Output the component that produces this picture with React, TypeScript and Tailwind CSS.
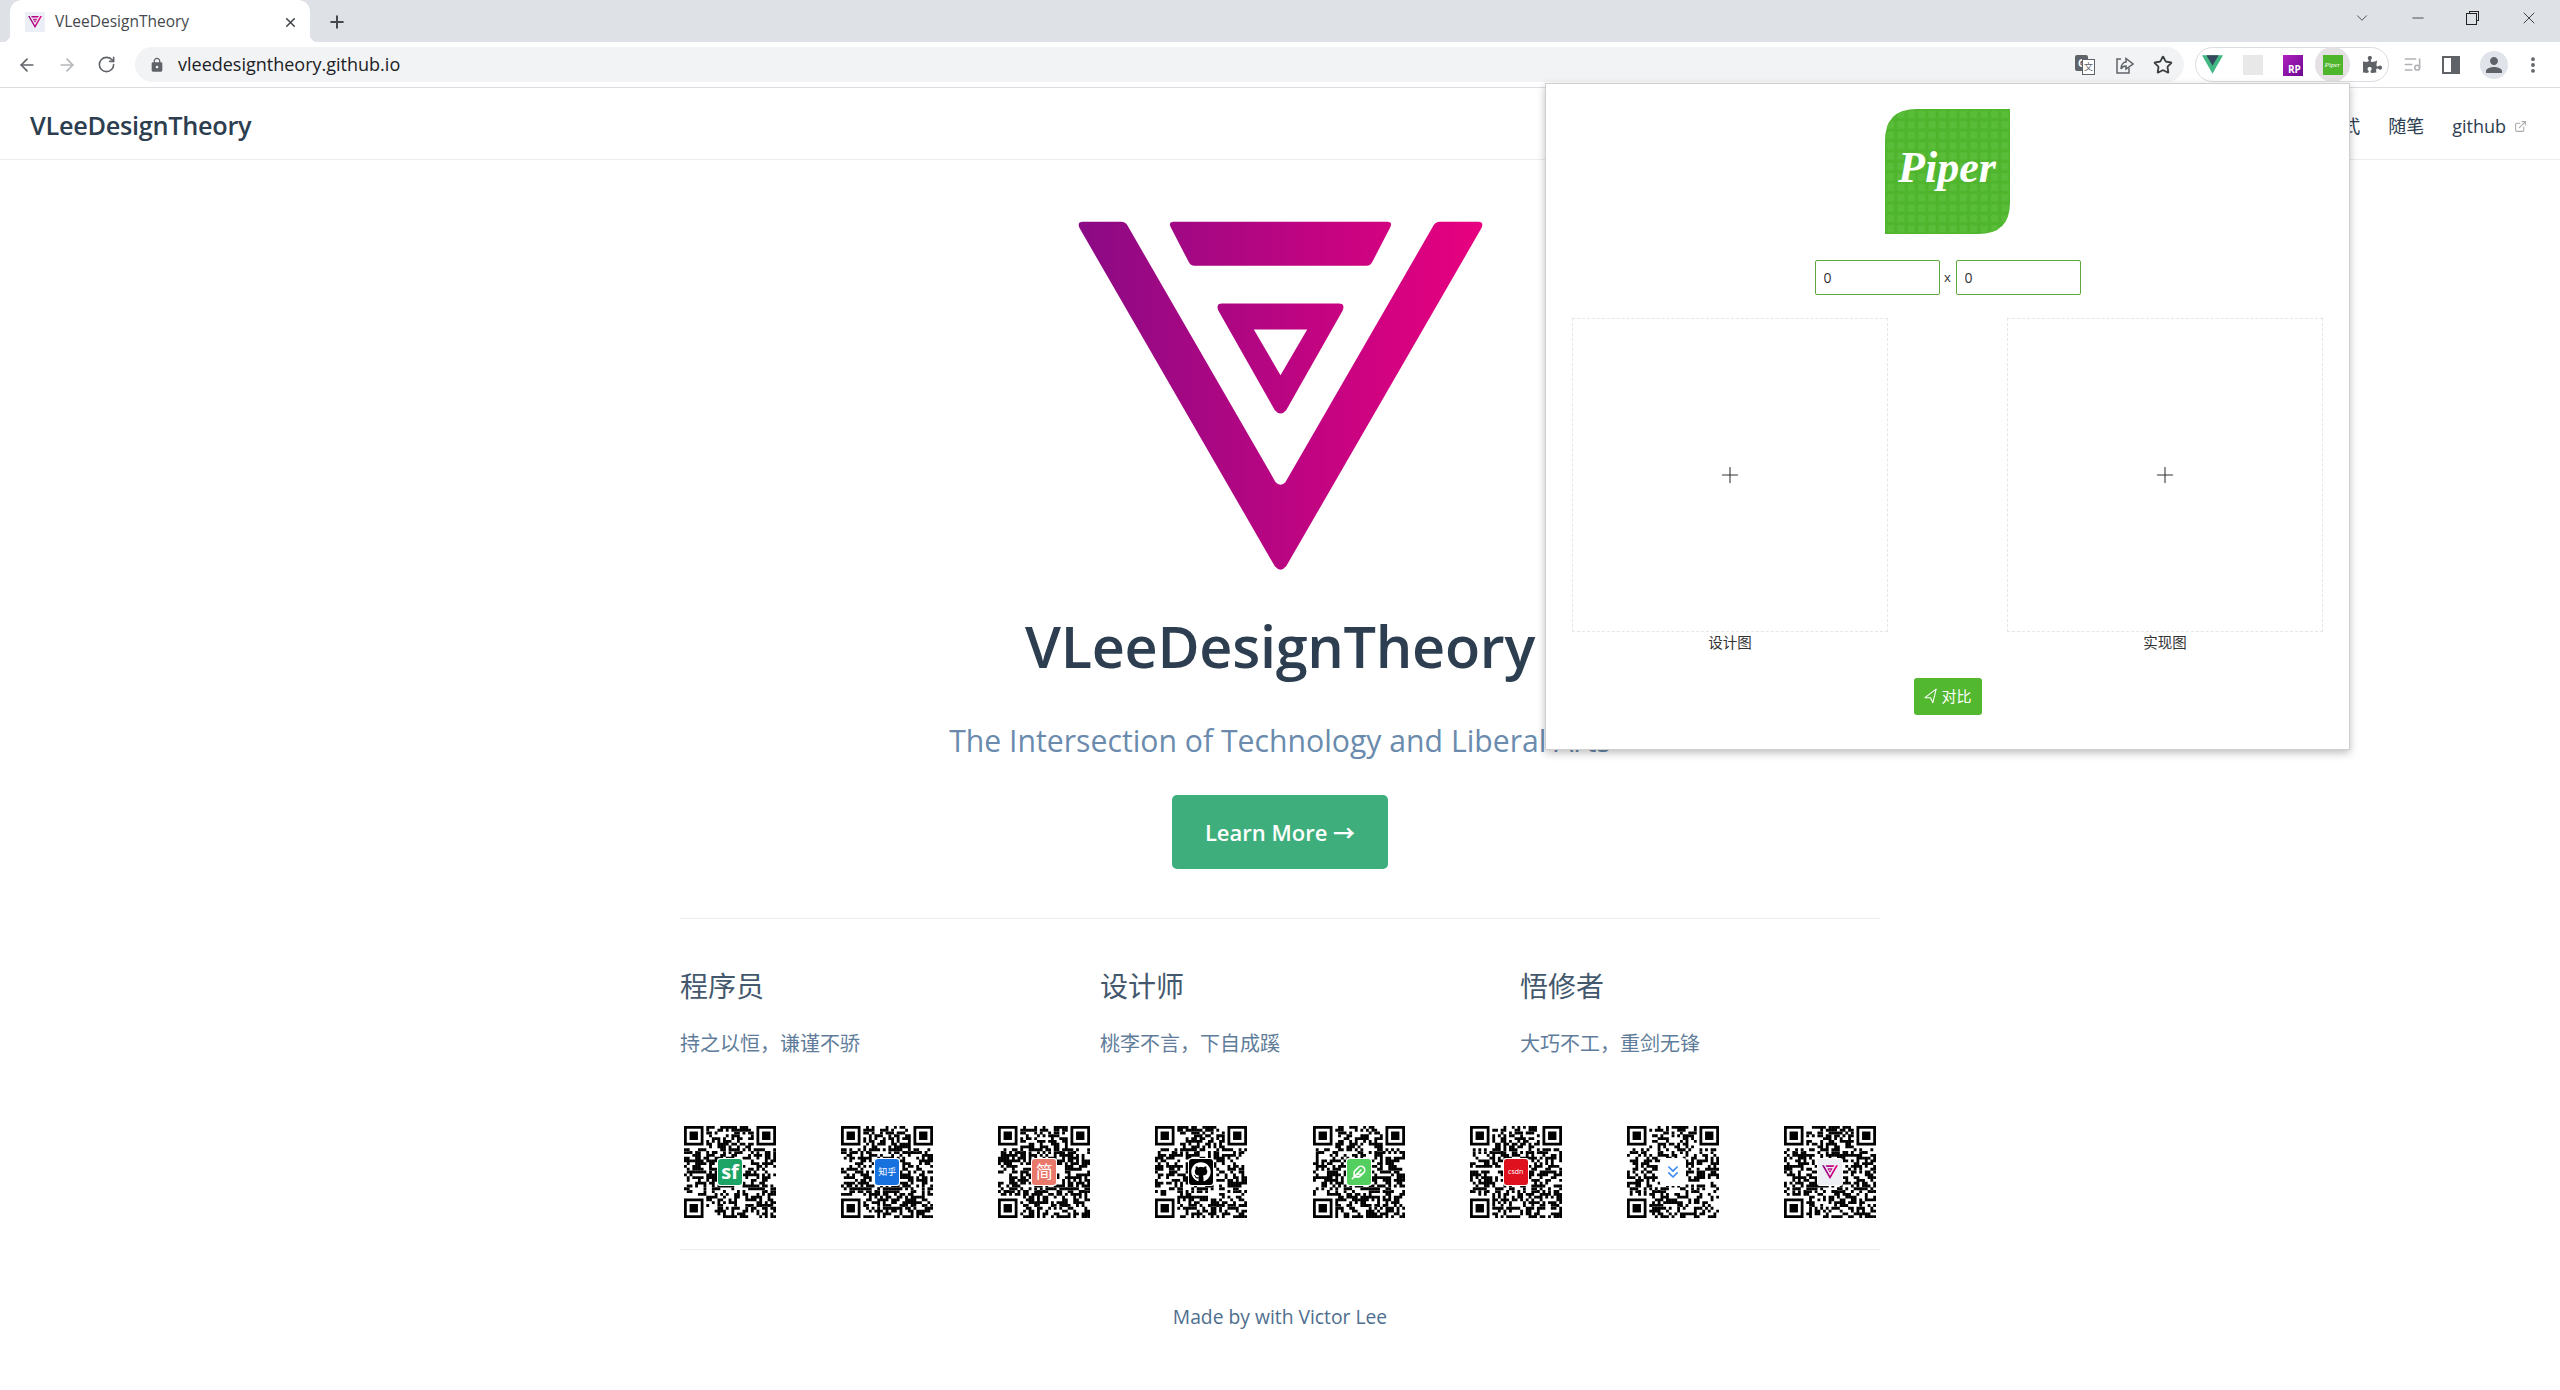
import React from "react";
import { ArrowLeft, ArrowRight, RotateCw, Star, Plus, X, ChevronDown, Minus, EllipsisVertical, ListMusic, ExternalLink, Navigation, Feather, ChevronsDown } from "lucide-react";
import { FaPuzzlePiece, FaGithub } from "react-icons/fa";
import { MdPerson, MdLock } from "react-icons/md";

function VLogo({ id, className }: { id: string; className?: string }) {
  return (
    <svg viewBox="110 60 1220 1055" className={className}>
      <defs>
        <linearGradient id={id} gradientUnits="userSpaceOnUse" x1="115" y1="0" x2="1325" y2="0">
          <stop offset="0" stopColor="#8b0a85" />
          <stop offset="1" stopColor="#e8007f" />
        </linearGradient>
      </defs>
      <path fill={`url(#${id})`} d="M127 65 H243 Q255 65 261 76 L705 845 Q720 862 735 845 L1179 76 Q1185 65 1197 65 H1313 Q1331 65 1322 85 L737 1098 Q720 1118 703 1098 L118 85 Q109 65 127 65 Z" />
      <path fill={`url(#${id})`} d="M400 65 H1040 Q1057 65 1049 82 L995 186 Q990 197 978 197 H462 Q450 197 445 186 L391 82 Q383 65 400 65 Z" />
      <path fill={`url(#${id})`} fillRule="evenodd" d="M545 310 H895 Q915 310 906 332 L737 630 Q720 650 703 630 L534 332 Q525 310 545 310 Z M640 388 L720 525 L800 388 Z" />
    </svg>
  );
}

function qrPath(seed: number) {
  const n = 33;
  let s = seed;
  const rnd = () => {
    s = (s * 1664525 + 1013904223) >>> 0;
    return ((s >>> 16) & 255) / 255;
  };
  let d = "";
  const inFinder = (x: number, y: number) =>
    (x < 8 && y < 8) || (x >= n - 8 && y < 8) || (x < 8 && y >= n - 8);
  for (let y = 0; y < n; y++) {
    for (let x = 0; x < n; x++) {
      if (inFinder(x, y)) continue;
      if (rnd() > 0.48) d += `M${x} ${y}h1.02v1.02h-1.02z`;
    }
  }
  const finder = (ox: number, oy: number) =>
    `M${ox} ${oy}h7v7h-7zM${ox + 1} ${oy + 1}v5h5v-5zM${ox + 2} ${oy + 2}h3v3h-3z`;
  d += finder(0, 0) + finder(n - 7, 0) + finder(0, n - 7);
  return d;
}

function QR({ seed, children }: { seed: number; children: React.ReactNode }) {
  return (
    <div className="relative w-[100px] h-[100px] flex items-center justify-center">
      <svg viewBox="0 0 33 33" className="w-[92px] h-[92px] blur-[0.4px]">
        <path d={qrPath(seed)} fill="#000" fillRule="evenodd" />
      </svg>
      <div className="absolute left-[37px] top-[36px] w-[26px] h-[28px] flex items-center justify-center overflow-hidden rounded-[3px] bg-white p-[1px]">
        {children}
      </div>
    </div>
  );
}

function PiperLogo() {
  return (
    <svg viewBox="0 0 125 125" className="w-[125px] h-[125px]">
      <defs>
        <pattern id="piper-grid" width="10.4" height="10.4" patternUnits="userSpaceOnUse">
          <rect x="2" y="2" width="7" height="7" fill="#5abd3a" />
        </pattern>
      </defs>
      <path d="M32 0 H125 V93 Q125 125 93 125 H0 V32 Q0 0 32 0 Z" fill="#4fb52d" />
      <path d="M32 0 H125 V93 Q125 125 93 125 H0 V32 Q0 0 32 0 Z" fill="url(#piper-grid)" />
      <text x="62" y="73" textAnchor="middle" fill="#fff" fontFamily="'Liberation Serif', serif" fontStyle="italic" fontWeight="700" fontSize="44">
        Piper
      </text>
    </svg>
  );
}

function Toolbar() {
  return (
    <div className="h-[46px] bg-white border-b border-[#dadce0] flex items-center relative shrink-0">
      <div className="w-[135px] flex items-center pl-[17px] gap-[20px] text-[#5f6368]">
        <ArrowLeft size={20} strokeWidth={2} />
        <ArrowRight size={20} strokeWidth={2} className="text-[#b4b6b9]" />
        <RotateCw size={19} strokeWidth={2} />
      </div>
      <div className="w-[2049px] h-[35px] rounded-full bg-[#f1f3f4] flex items-center pl-[14px] pr-[11px] text-[18px] text-[#202124]">
        <MdLock size={16} className="text-[#5f6368]" />
        <span className="ml-[13px]">vleedesigntheory.github.io</span>
        <div className="ml-auto flex items-center gap-[19px] text-[#5f6368]">
          <div className="relative w-[20px] h-[20px]">
            <div className="absolute left-0 top-0 w-[13px] h-[16px] rounded-[2px] bg-[#5f6368] text-white text-[10px] leading-[16px] text-center font-bold">G</div>
            <div className="absolute left-[7px] top-[4px] w-[13px] h-[16px] border border-[#5f6368] bg-white text-[9px] leading-[14px] text-center text-[#5f6368]">文</div>
          </div>
          <svg viewBox="0 0 20 20" className="w-[20px] h-[20px]" fill="none" stroke="#5f6368" strokeWidth="1.5">
            <path d="M7 4 H3 V18 H15 V13" />
            <path d="M7 14 C7 9 10 7 12 7 V3.5 L19 9 L12 14 V11 C10 11 8 12 7 14 Z" />
          </svg>
          <Star size={20} strokeWidth={2.2} className="text-[#3c4043]" />
        </div>
      </div>
      <div className="ml-[11px] w-[194px] h-[35px] rounded-full border border-[#dadce0] flex items-center relative">
        <svg viewBox="0 0 24 21" className="absolute left-[6px] top-[7px] w-[21px] h-[19px]">
          <polygon points="0,0 24,0 12,21" fill="#41b883" />
          <polygon points="5,0 19,0 12,12" fill="#35495e" />
        </svg>
        <div className="absolute left-[47px] top-[7px] w-[20px] h-[20px] bg-[#e8e8e8]" />
        <div className="absolute left-[87px] top-[7px] w-[20px] h-[21px] bg-[linear-gradient(135deg,#b01fc0,#6a0a90)] text-white text-[10px] leading-[28px] pl-[5px] font-bold overflow-hidden">RP</div>
        <div className="absolute left-[119px] top-[-1px] w-[35px] h-[35px] rounded-full bg-[#e4e0e4] flex items-center justify-center">
          <div className="w-[20px] h-[20px] bg-[#4fb52d] text-white text-[7px] italic leading-[20px] text-center font-['Liberation_Serif',serif]">Piper</div>
        </div>
        <FaPuzzlePiece size={19} className="absolute left-[167px] top-[7px] text-[#5f6368]" />
      </div>
      <div className="flex items-center ml-[14px] gap-[20px]">
        <ListMusic size={19} className="text-[#b0b2b5]" />
        <div className="w-[18px] h-[18px] border-[2px] border-[#5f6368] flex justify-end">
          <div className="w-[7px] h-full bg-[#5f6368]" />
        </div>
        <div className="w-[28px] h-[28px] rounded-full bg-[#e1e3ea] flex items-center justify-center">
          <MdPerson size={24} className="text-[#5f6368]" />
        </div>
        <EllipsisVertical size={20} strokeWidth={2.6} className="text-[#5f6368] -ml-[5px]" />
      </div>
    </div>
  );
}

function TabStrip() {
  return (
    <div className="h-[42px] bg-[#dee1e6] flex relative shrink-0">
      <div className="relative ml-[10px] w-[300px] h-full bg-white rounded-t-[12px] flex items-center pl-[15px] pr-[12px] pt-[2px]">
        <div className="absolute left-[-8px] bottom-0 w-[8px] h-[8px] bg-[radial-gradient(circle_at_0_0,#dee1e6_8px,#ffffff_8.5px)]" />
        <div className="absolute right-[-8px] bottom-0 w-[8px] h-[8px] bg-[radial-gradient(circle_at_100%_0,#dee1e6_8px,#ffffff_8.5px)]" />
        <div className="w-[20px] h-[20px] bg-[#eceef5] flex items-center justify-center">
          <VLogo id="fav-grad" className="w-[14px] h-[12px]" />
        </div>
        <span className="ml-[10px] text-[15.5px] text-[#45494e]">VLeeDesignTheory</span>
        <X size={15} strokeWidth={2.5} className="ml-auto text-[#45494e]" />
      </div>
      <Plus size={20} strokeWidth={2.4} className="ml-[17px] mt-[12px] text-[#45494e]" />
      <div className="ml-auto flex items-center text-[#222] pr-[21px] gap-[39px] mb-[6px]">
        <ChevronDown size={18} strokeWidth={1} />
        <Minus size={18} strokeWidth={1} className="-ml-[1px]" />
        <div className="relative w-[14px] h-[14px]">
          <div className="absolute left-[3px] top-0 w-[10px] h-[10px] border border-[#222]" />
          <div className="absolute left-0 top-[2px] w-[11px] h-[12px] border border-[#222] bg-[#dee1e6]" />
        </div>
        <X size={20} strokeWidth={1} />
      </div>
    </div>
  );
}

function Popup() {
  return (
    <div className="absolute left-[1545px] top-[83px] w-[805px] h-[667px] bg-white border border-[#cfcfcf] shadow-[0_3px_8px_rgba(0,0,0,0.25)] flex flex-col items-center pt-[25px] text-[#333]">
      <PiperLogo />
      <div className="mt-[26px] flex items-center">
        <input readOnly value="0" className="w-[125px] h-[35px] border border-[#5fa83b] rounded-[2px] px-[8px] text-[14px] text-[#333] outline-none" />
        <span className="w-[16px] text-center text-[13px]">x</span>
        <input readOnly value="0" className="w-[125px] h-[35px] border border-[#5fa83b] rounded-[2px] px-[8px] text-[14px] text-[#333] outline-none" />
      </div>
      <div className="mt-[23px] w-full px-[26px] flex justify-between">
        {["设计图", "实现图"].map((t) => (
          <div key={t} className="w-[316px] flex flex-col items-center">
            <div className="w-full h-[314px] border border-dashed border-[#e6e6e6] flex items-center justify-center">
              <Plus size={26} strokeWidth={1} className="text-[#333]" />
            </div>
            <div className="mt-[1px] text-[14.5px] leading-[20px] text-[#333]">{t}</div>
          </div>
        ))}
      </div>
      <div className="mt-[25px] w-[68px] h-[37px] rounded-[3px] bg-[#52b82f] text-white flex items-center justify-center gap-[2px] text-[15px]">
        <Navigation size={16} strokeWidth={1.6} className="-rotate-12" />
        <span>对比</span>
      </div>
    </div>
  );
}

export default function App() {
  return (
    <div className="relative w-[2560px] h-[1390px] overflow-hidden bg-white flex flex-col font-['Open_Sans','Noto_Sans_CJK_SC',sans-serif] text-[#2c3e50]">
      <TabStrip />
      <Toolbar />
      <header className="h-[72px] border-b border-[#eaecef] flex items-center justify-between pl-[30px] pr-[29px] pt-[5px] shrink-0">
        <span className="text-[25.3px] font-semibold tracking-[-0.3px]">VLeeDesignTheory</span>
        <nav className="flex items-center gap-[28px] text-[18px] pr-[4px]">
          <span>样式</span>
          <span>随笔</span>
          <span className="flex items-center gap-[8px]">
            github
            <ExternalLink size={13} className="text-[#aaaaaa]" />
          </span>
        </nav>
      </header>
      <main className="w-[1200px] mx-auto flex flex-col items-center">
        <VLogo id="hero-grad" className="mt-[60px] w-[407px] h-[352px]" />
        <h1 className="mt-[34px] text-[57.6px] leading-[80px] font-semibold text-[#2c3e50] tracking-[-0.3px]">VLeeDesignTheory</h1>
        <p className="mt-[32px] text-[30.2px] leading-[46px] text-[#6a8bad]">The Intersection of Technology and Liberal Arts</p>
        <a className="mt-[31px] w-[216px] h-[74px] rounded-[5px] bg-[#3eaf7c] text-white text-[22px] font-semibold flex items-center justify-center">Learn More →</a>
        <div className="mt-[49px] w-full border-t border-[#eaecef] pt-[43px] flex justify-between">
          {[
            ["程序员", "持之以恒，谦谨不骄"],
            ["设计师", "桃李不言，下自成蹊"],
            ["悟修者", "大巧不工，重剑无锋"],
          ].map(([h, p]) => (
            <div key={h} className="w-[360px]">
              <h2 className="text-[28px] leading-[48px] text-[#44586d]">{h}</h2>
              <p className="mt-[11px] text-[20px] leading-[46px] text-[#5f7d9a]">{p}</p>
            </div>
          ))}
        </div>
        <div className="mt-[55px] w-full flex justify-between">
          <QR seed={11}>
            <div className="w-full h-full rounded-[3px] bg-[#1ba466] text-white text-[20px] font-bold leading-none flex items-center justify-center">sf</div>
          </QR>
          <QR seed={29}>
            <div className="w-full h-full rounded-[3px] bg-[#1772e0] text-white text-[9px] flex items-center justify-center">知乎</div>
          </QR>
          <QR seed={47}>
            <div className="w-full h-full rounded-[3px] bg-[#e9796b] text-white text-[17px] flex items-center justify-center">简</div>
          </QR>
          <QR seed={83}>
            <div className="w-full h-full rounded-[3px] bg-black text-white flex items-center justify-center">
              <FaGithub size={20} />
            </div>
          </QR>
          <QR seed={101}>
            <div className="w-full h-full rounded-[3px] bg-[#52cf5e] text-white flex items-center justify-center">
              <Feather size={15} strokeWidth={2.5} />
            </div>
          </QR>
          <QR seed={131}>
            <div className="w-full h-full rounded-[3px] bg-[#e0111f] text-white text-[7px] flex items-center justify-center">csdn</div>
          </QR>
          <QR seed={167}>
            <div className="w-full h-full bg-white text-[#3f8cf0] flex items-center justify-center">
              <ChevronsDown size={20} strokeWidth={2} />
            </div>
          </QR>
          <QR seed={199}>
            <div className="w-full h-full bg-[#eeeef5] flex items-center justify-center">
              <VLogo id="qr-grad" className="w-[16px] h-[14px]" />
            </div>
          </QR>
        </div>
        <footer className="mt-[27px] w-full border-t border-[#eaecef] pt-[52px] text-center text-[19.3px] leading-[30px] text-[#4e6e8e]">Made by with Victor Lee</footer>
      </main>
      <Popup />
    </div>
  );
}
